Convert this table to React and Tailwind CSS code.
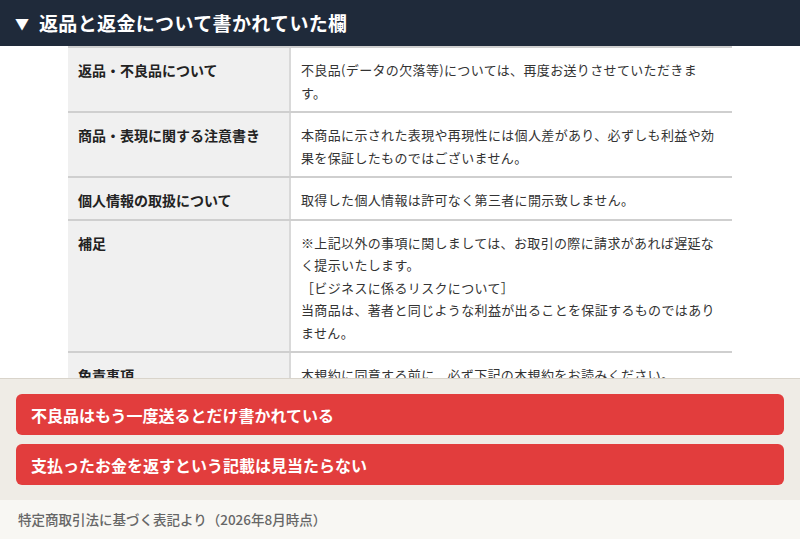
const FONT = { fontFamily: '"Noto Sans CJK JP", "Noto Sans", sans-serif' };

const rows = [
  {
    label: '返品・不良品について',
    value: ['不良品(データの欠落等)については、再度お送りさせていただきます。'],
  },
  {
    label: '商品・表現に関する注意書き',
    value: ['本商品に示された表現や再現性には個人差があり、必ずしも利益や効果を保証したものではございません。'],
  },
  {
    label: '個人情報の取扱について',
    value: ['取得した個人情報は許可なく第三者に開示致しません。'],
  },
  {
    label: '補足',
    value: [
      '※上記以外の事項に関しましては、お取引の際に請求があれば遅延なく提示いたします。',
      '［ビジネスに係るリスクについて］',
      '当商品は、著者と同じような利益が出ることを保証するものではありません。',
    ],
  },
  {
    label: '免責事項',
    value: ['本規約に同意する前に、必ず下記の本規約をお読みください。'],
  },
];

export default function App() {
  return (
    <div className="flex h-[539px] w-[800px] flex-col overflow-hidden bg-white" style={FONT}>
      {/* header */}
      <div className="flex h-[46px] shrink-0 items-center bg-[#1f2a3a] pl-[15px] text-white">
        <span className="mr-[10px] text-[14px]">▼</span>
        <span className="text-[19px] font-bold tracking-[0.35px]">返品と返金について書かれていた欄</span>
      </div>

      {/* table area */}
      <div className="min-h-0 flex-1 overflow-hidden">
        <div className="ml-[68px] w-[664px] border-t-2 border-[#cfcfcf]">
          {rows.map((row) => (
            <div key={row.label} className="flex border-b-2 border-[#cfcfcf]">
              <div className="w-[223px] shrink-0 border-r-2 border-[#d9d9d9] bg-[#f0f0f0] pt-[11px] pb-[7px] pl-[10px] text-[14px] leading-[22.5px] font-bold text-[#222]">
                {row.label}
              </div>
              <div className="flex-1 pt-[11px] pr-[12px] pb-[7px] pl-[10px] text-[13px] leading-[22.5px] tracking-[0.35px] text-[#333]">
                {row.value.map((line) => (
                  <div key={line}>{line}</div>
                ))}
              </div>
            </div>
          ))}
        </div>
      </div>

      {/* verdict panel */}
      <div className="shrink-0 border-t border-[#d9d4cb] bg-[#efece6] px-[16px] py-[15px]">
        <div className="flex flex-col gap-[9px]">
          <div className="flex h-[41px] items-center rounded-[6px] bg-[#e23d3d] px-[15px] text-[16px] font-bold text-white">
            不良品はもう一度送るとだけ書かれている
          </div>
          <div className="flex h-[41px] items-center rounded-[6px] bg-[#e23d3d] px-[15px] text-[16px] font-bold text-white">
            支払ったお金を返すという記載は見当たらない
          </div>
        </div>
      </div>

      {/* footer */}
      <div className="flex h-[39px] shrink-0 items-center bg-[#f8f7f3] px-[18px] text-[13.5px] font-medium text-[#666]">
        特定商取引法に基づく表記より（2026年8月時点）
      </div>
    </div>
  );
}
